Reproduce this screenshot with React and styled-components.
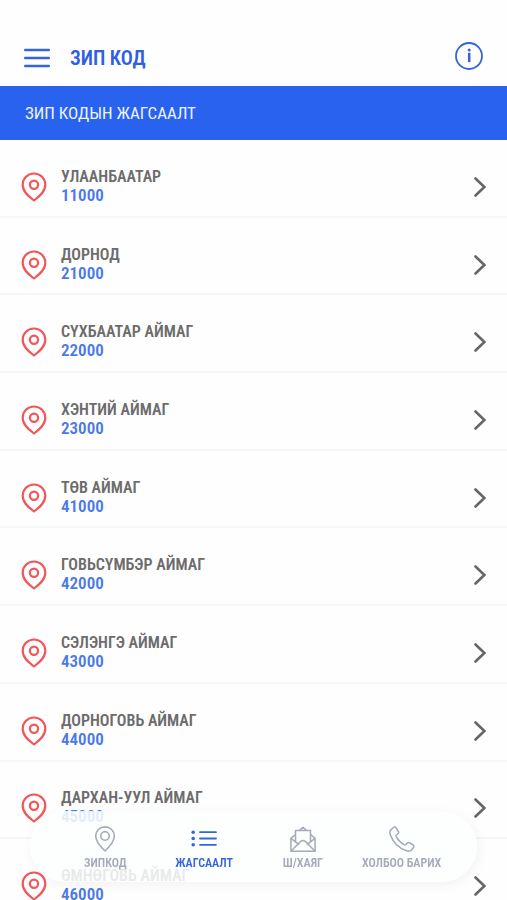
import React from 'react'
import styled, { createGlobalStyle } from 'styled-components'

const regions = [
  { name: 'УЛААНБААТАР', code: '11000' },
  { name: 'ДОРНОД', code: '21000' },
  { name: 'СҮХБААТАР АЙМАГ', code: '22000' },
  { name: 'ХЭНТИЙ АЙМАГ', code: '23000' },
  { name: 'ТӨВ АЙМАГ', code: '41000' },
  { name: 'ГОВЬСҮМБЭР АЙМАГ', code: '42000' },
  { name: 'СЭЛЭНГЭ АЙМАГ', code: '43000' },
  { name: 'ДОРНОГОВЬ АЙМАГ', code: '44000' },
  { name: 'ДАРХАН-УУЛ АЙМАГ', code: '45000' },
  { name: 'ӨМНӨГОВЬ АЙМАГ', code: '46000' },
]

const MenuIcon = () => (
  <svg width="26" height="20" viewBox="0 0 26 20" fill="none" stroke="currentColor" strokeWidth="2.4" strokeLinecap="round" aria-hidden="true">
    <path d="M1.2 2h23.6M1.2 10h23.6M1.2 18h23.6" />
  </svg>
)

const InfoIcon = () => (
  <svg width="28" height="28" viewBox="0 0 28 28" fill="none" stroke="currentColor" aria-hidden="true">
    <circle cx="14" cy="14" r="13" strokeWidth="1.8" />
    <path d="M14.2 10.8v9.400" strokeWidth="2.5" />
    <circle cx="14.2" cy="8" r="1.500" fill="currentColor" stroke="none" />
  </svg>
)

const PinIcon = () => (
  <svg width="26" height="30" viewBox="0 0 26 30" fill="none" stroke="currentColor" strokeWidth="2.2" strokeLinejoin="round" aria-hidden="true">
    <path d="M13 1.5C6.700 1.500 1.700 6.400 1.700 12.700C1.700 20.100 8.500 25 13 28.500C17.500 25 24.300 20.100 24.300 12.700C24.300 6.400 19.300 1.500 13 1.500Z" />
    <circle cx="13" cy="12.700" r="4.100" />
  </svg>
)

const ChevronIcon = () => (
  <svg width="12" height="20" viewBox="0 0 12 20" fill="none" stroke="currentColor" strokeWidth="2.6" strokeLinecap="round" aria-hidden="true">
    <path d="M1.5 1.5L10.400 10L1.500 18.500" />
  </svg>
)

const SmallPinIcon = () => (
  <svg width="26" height="26" viewBox="0 0 26 26" fill="none" stroke="currentColor" strokeWidth="1.6" strokeLinejoin="round" aria-hidden="true">
    <path d="M13 .9C7.800.9 3.700 4.900 3.700 10C3.700 16 9 21.200 13 25C17 21.200 22.300 16 22.300 10C22.300 4.900 18.200.9 13 .9Z" />
    <circle cx="13" cy="10" r="4.200" />
  </svg>
)

const ListIcon = () => (
  <svg width="26" height="26" viewBox="0 0 26 26" fill="none" stroke="currentColor" strokeWidth="1.8" strokeLinecap="round" aria-hidden="true">
    <path d="M9 6.200h16M9 12.500h16M9 18.800h16" />
    <g fill="currentColor" stroke="none">
      <circle cx="2.200" cy="6.200" r="1.800" />
      <circle cx="2.200" cy="12.500" r="1.800" />
      <circle cx="2.200" cy="18.800" r="1.800" />
    </g>
  </svg>
)

const MailIcon = () => (
  <svg width="26" height="26" viewBox="0 0 26 26" fill="none" stroke="currentColor" strokeWidth="1.5" strokeLinejoin="round" aria-hidden="true">
    <path d="M5.500 8.500L.9 12.400V25.200H25.100V12.400L20.500 8.500" />
    <path d="M5.500 15.800V4.400H20.500V15.800" />
    <path d="M9.700 4.400L13 1.200L16.300 4.400" />
    <path d="M.9 12.400L9.200 18.600M25.100 12.400L16.800 18.600" />
    <path d="M.9 25.200L10.800 15.300Q13 13.500 15.200 15.300L25.100 25.200" />
  </svg>
)

const PhoneIcon = () => (
  <svg width="26" height="26" viewBox="0 0 26 26" fill="none" stroke="currentColor" strokeWidth="1.5" strokeLinejoin="round" aria-hidden="true">
    <path d="M2.300 3.300L4.500 1.500C5.400.800 6.500 1 7.100 1.900L9.300 5.500C9.900 6.500 9.600 7.400 8.700 8L7.500 8.900C6.900 9.400 6.900 10 7.200 10.600C9 14 12 17 15.400 18.800C16 19.100 16.600 19.100 17.100 18.500L18 17.300C18.700 16.400 19.600 16.200 20.500 16.700L24.100 19C25 19.600 25.200 20.600 24.500 21.500L22.700 23.800C21.500 25.300 19.600 25.400 17.600 24.700C9.900 22.100 3.800 15.700 1.200 8.400C.500 6.400.800 4.500 2.300 3.300Z" />
  </svg>
)

const tabs = [
  { label: 'ЗИПКОД', icon: <SmallPinIcon /> },
  { label: 'ЖАГСААЛТ', icon: <ListIcon />, active: true },
  { label: 'Ш/ХАЯГ', icon: <MailIcon /> },
  { label: 'ХОЛБОО БАРИХ', icon: <PhoneIcon /> },
]

const App = () => {
  return (
    <>
      <GlobalStyle />
      <Screen>
        <Header>
          <IconButton aria-label="Цэс">
            <MenuIcon />
          </IconButton>
          <Title>ЗИП КОД</Title>
          <IconButton aria-label="Мэдээлэл">
            <InfoIcon />
          </IconButton>
        </Header>

        <Banner>ЗИП КОДЫН ЖАГСААЛТ</Banner>

        <Scroll>
          <List>
            {regions.map((region) => (
              <Row key={region.code}>
                <RowLink href={`#${region.code}`}>
                  <PinIcon />
                  <RowText>
                    <RowName>{region.name}</RowName>
                    <RowCode>{region.code}</RowCode>
                  </RowText>
                  <ChevronIcon />
                </RowLink>
              </Row>
            ))}
          </List>
        </Scroll>

        <TabBar>
          {tabs.map((tab) => (
            <Tab key={tab.label} $active={tab.active}>
              {tab.icon}
              {tab.label}
            </Tab>
          ))}
        </TabBar>
      </Screen>
    </>
  )
}

const GlobalStyle = createGlobalStyle`
  * {
    box-sizing: border-box;
  }

  body {
    margin: 0;
    background: #fefefe;
    font-family: 'Roboto Condensed', 'Liberation Sans Narrow', Roboto, sans-serif;
  }
`

const Screen = styled.div`
  height: 100vh;
  display: flex;
  flex-direction: column;
`

const Header = styled.header`
  display: flex;
  align-items: flex-end;
  padding: 42px 24px 16px;
`

const IconButton = styled.button`
  display: flex;
  padding: 0;
  border: 0;
  background: none;
  color: #3463dc;
  cursor: pointer;

  &:first-child {
    padding-bottom: 2px;
  }
`

const Title = styled.h1`
  flex: 1;
  margin: 0 0 0 20px;
  font-size: 20px;
  line-height: 24px;
  font-weight: 600;
  color: #2f60e0;
`

const Banner = styled.h2`
  margin: 0;
  padding: 15px 25px;
  background: #2962ee;
  color: #eef3ff;
  font-size: 17px;
  line-height: 24px;
  font-weight: 400;
`

const Scroll = styled.main`
  flex: 1;
  min-height: 0;
  overflow-y: auto;
  scrollbar-width: none;
`

const List = styled.ul`
  display: grid;
  grid-auto-rows: 1fr;
  min-height: 777px;
  margin: 0;
  padding: 0;
  list-style: none;
`

const Row = styled.li`
  display: flex;
  border-bottom: 2px solid #f6f6f6;
`

const RowLink = styled.a`
  flex: 1;
  display: flex;
  align-items: center;
  padding: 18px 21px 0;
  color: #f25659;
  text-decoration: none;

  > svg:last-child {
    color: #666;
  }
`

const RowText = styled.div`
  flex: 1;
  display: flex;
  flex-direction: column;
  padding: 0 0 2px 14px;
  font-weight: 600;
  line-height: 19px;
`

const RowName = styled.span`
  font-size: 16px;
  color: #6c6c6c;
`

const RowCode = styled.span`
  font-size: 17px;
  color: #4a79e8;
`

const TabBar = styled.nav`
  position: fixed;
  left: 30px;
  right: 30px;
  bottom: 18px;
  display: flex;
  justify-content: center;
  padding: 15px 26px 12px;
  border-radius: 36px;
  background: rgba(253, 254, 254, 0.86);
  box-shadow: 2px 3px 12px rgba(0, 0, 0, 0.05);
`

const Tab = styled.button`
  flex: 1;
  display: flex;
  flex-direction: column;
  align-items: center;
  gap: 4px;
  padding: 0;
  border: 0;
  background: none;
  font-family: inherit;
  font-size: 12px;
  line-height: 14px;
  font-weight: 600;
  white-space: nowrap;
  color: ${(props) => (props.$active ? '#3566dd' : '#a4aab6')};
  cursor: pointer;
`

export default App
